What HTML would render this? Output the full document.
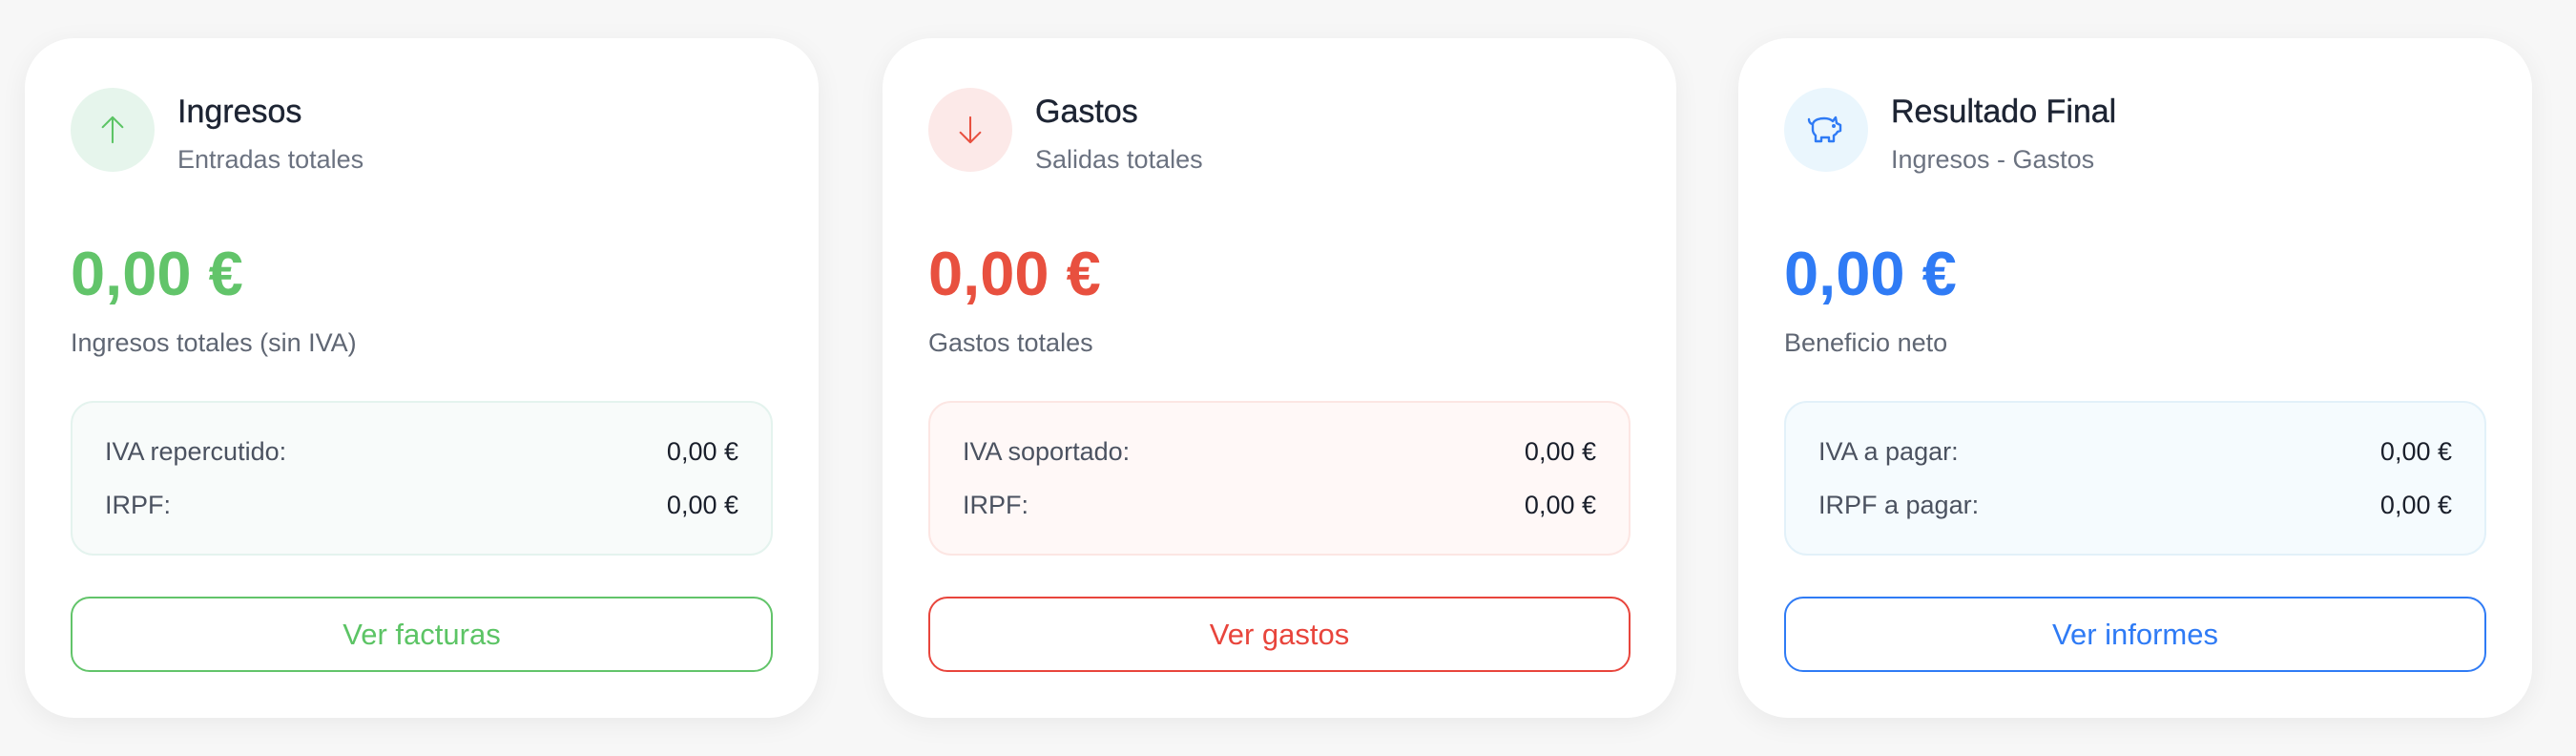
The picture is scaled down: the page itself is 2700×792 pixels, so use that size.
<!DOCTYPE html>
<html><head><meta charset="utf-8"><style>
*{box-sizing:border-box;margin:0;padding:0}
body{width:2700px;height:792px;background:#f7f7f7;font-family:"Liberation Sans",sans-serif;position:relative;overflow:hidden}
.card{position:absolute;top:40px;width:832px;height:712px;background:#fff;border-radius:52px;box-shadow:0 6px 28px rgba(0,0,0,0.06)}
.ic{position:absolute;left:48px;top:52px;width:88px;height:88px;border-radius:50%;display:flex;align-items:center;justify-content:center}
.t{position:absolute;left:160px;top:58px;font-size:34px;color:#1d2433;-webkit-text-stroke:0.4px #1d2433}
.s{position:absolute;left:160px;top:112px;font-size:27px;color:#6b7280}
.amt{position:absolute;left:48px;top:209px;font-size:65px;font-weight:bold}
.lbl{position:absolute;left:48px;top:304px;font-size:27px;color:#5f6673}
.box{position:absolute;left:48px;top:380px;width:736px;height:162px;border-radius:24px;border:2px solid}
.row{position:absolute;left:34px;right:34px;font-size:27px;color:#4b5260;display:flex;justify-content:space-between}
.row b{font-weight:normal;color:#1a1f2b}
.btn{position:absolute;left:48px;top:585px;width:736px;height:79px;border-radius:20px;border:2px solid;display:flex;align-items:center;justify-content:center;font-size:31px}
</style></head><body>
<div class="card" style="left:26px">
 <div class="ic" style="background:#e6f5ec"><svg width="30" height="32" viewBox="0 0 32 34" fill="none" stroke="#5cc465" stroke-width="2.2" stroke-linecap="round" stroke-linejoin="round"><path d="M16 31V3M5 14L16 3l11 11"/></svg></div>
 <div class="t">Ingresos</div><div class="s">Entradas totales</div>
 <div class="amt" style="color:#62c46a">0,00 €</div>
 <div class="lbl">Ingresos totales (sin IVA)</div>
 <div class="box" style="background:#f8fbfa;border-color:#e4f3ee"><div class="row" style="top:36px"><span>IVA repercutido:</span><b>0,00 €</b></div><div class="row" style="top:92px"><span>IRPF:</span><b>0,00 €</b></div></div>
 <div class="btn" style="border-color:#62c46a;color:#5cc465">Ver facturas</div>
</div>
<div class="card" style="left:925px">
 <div class="ic" style="background:#fce9e8"><svg width="30" height="32" viewBox="0 0 32 34" fill="none" stroke="#e8503f" stroke-width="2.2" stroke-linecap="round" stroke-linejoin="round"><path d="M16 3v28M5 20l11 11 11-11"/></svg></div>
 <div class="t">Gastos</div><div class="s">Salidas totales</div>
 <div class="amt" style="color:#e8503f">0,00 €</div>
 <div class="lbl">Gastos totales</div>
 <div class="box" style="background:#fff8f7;border-color:#fce6e3"><div class="row" style="top:36px"><span>IVA soportado:</span><b>0,00 €</b></div><div class="row" style="top:92px"><span>IRPF:</span><b>0,00 €</b></div></div>
 <div class="btn" style="border-color:#e8453c;color:#e8453c">Ver gastos</div>
</div>
<div class="card" style="left:1822px">
 <div class="ic" style="background:#eaf6fd"><svg width="40" height="30" viewBox="0 0 40 30" fill="none" stroke="#2f7bf5" stroke-width="2.4" stroke-linejoin="round" stroke-linecap="round"><path d="M2 4c0 3 2 5 4 5M6 9c1-4 6-6 12-6 4 0 7 1 9 3l3-4 1 6 4 2v6l-3 1c-1 2-2 3-4 4v6h-5v-4h-8v4H9v-6c-2-2-3-4-3-6z"/><circle cx="28" cy="11" r="0.8" fill="#2f7bf5"/></svg></div>
 <div class="t">Resultado Final</div><div class="s">Ingresos - Gastos</div>
 <div class="amt" style="color:#2f7bf5">0,00 €</div>
 <div class="lbl">Beneficio neto</div>
 <div class="box" style="background:#f5fbfe;border-color:#e2f1f9"><div class="row" style="top:36px"><span>IVA a pagar:</span><b>0,00 €</b></div><div class="row" style="top:92px"><span>IRPF a pagar:</span><b>0,00 €</b></div></div>
 <div class="btn" style="border-color:#2f7bf5;color:#2f7bf5">Ver informes</div>
</div>
</body></html>
